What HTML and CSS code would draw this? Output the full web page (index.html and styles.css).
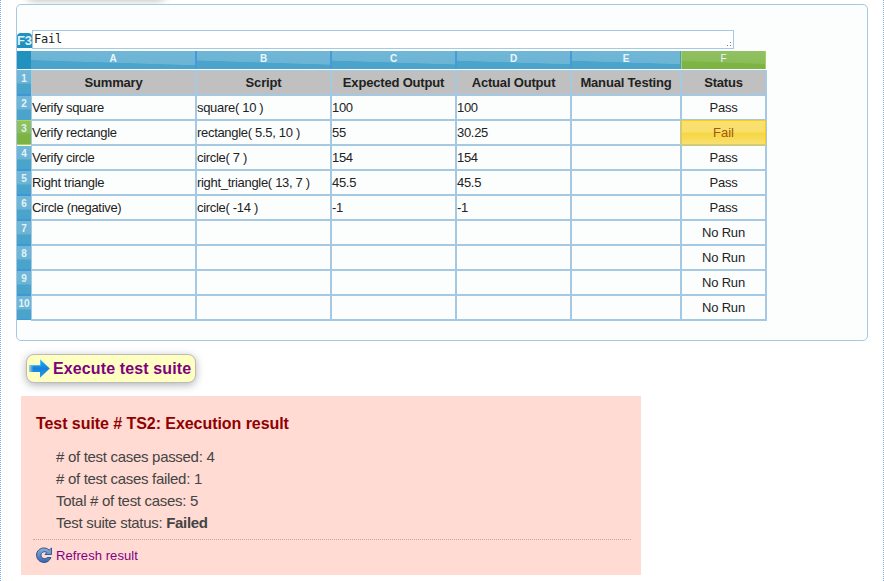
FILE: index.html
```
<!DOCTYPE html>
<html lang="en">
<head>
<meta charset="utf-8">
<title>Test suite</title>
<link rel="stylesheet" href="styles.css">
</head>
<body>
<main class="page">
  <div class="previous-button"></div>
  <section class="panel">
    <div class="formula"><span class="cell-name">F3</span><div class="formula-input">Fail<span class="grip"></span></div></div>
    <div class="sheet">
      <div class="corner"></div>
      <div class="col-heads"><span>A</span><span>B</span><span>C</span><span>D</span><span>E</span><span class="active">F</span></div>
      <div class="row-heads"><span>1</span><span>2</span><span class="active">3</span><span>4</span><span>5</span><span>6</span><span>7</span><span>8</span><span>9</span><span>10</span></div>
      <div class="cells">
        <b>Summary</b><b>Script</b><b>Expected Output</b><b>Actual Output</b><b>Manual Testing</b><b>Status</b>
        <span>Verify square</span><span>square( 10 )</span><span>100</span><span>100</span><span></span><span class="status">Pass</span>
        <span>Verify rectangle</span><span>rectangle( 5.5, 10 )</span><span>55</span><span>30.25</span><span></span><span class="status selected"><i>Fail</i></span>
        <span>Verify circle</span><span>circle( 7 )</span><span>154</span><span>154</span><span></span><span class="status">Pass</span>
        <span>Right triangle</span><span>right_triangle( 13, 7 )</span><span>45.5</span><span>45.5</span><span></span><span class="status">Pass</span>
        <span>Circle (negative)</span><span>circle( -14 )</span><span>-1</span><span>-1</span><span></span><span class="status">Pass</span>
        <span></span><span></span><span></span><span></span><span></span><span class="status">No Run</span>
        <span></span><span></span><span></span><span></span><span></span><span class="status">No Run</span>
        <span></span><span></span><span></span><span></span><span></span><span class="status">No Run</span>
        <span></span><span></span><span></span><span></span><span></span><span class="status">No Run</span>
      </div>
    </div>
  </section>
  <a class="execute">
    <svg width="22" height="20" viewBox="0 0 22 20">
      <defs>
        <linearGradient id="arrow" x1="0" y1="0" x2="0" y2="1"><stop offset="0" stop-color="#25b4f5"/><stop offset=".5" stop-color="#1482dc"/><stop offset="1" stop-color="#2a9cf0"/></linearGradient>
        <linearGradient id="fade"><stop offset="0" stop-color="#fff" stop-opacity=".35"/><stop offset=".2" stop-color="#fff"/></linearGradient>
        <mask id="tail"><rect width="22" height="20" fill="url(#fade)"/></mask>
      </defs>
      <path d="M0 6H11V.2L20.800 9.500L11 18.800V13H0Z" fill="url(#arrow)" mask="url(#tail)"/>
      <path d="M11.500 1V6.500H3" fill="none" stroke="#4cc6f6" stroke-width=".8"/>
    </svg>
    <span>Execute test suite</span>
  </a>
  <section class="result">
    <h2>Test suite # TS2: Execution result</h2>
    <ul>
      <li># of test cases passed: 4</li>
      <li># of test cases failed: 1</li>
      <li>Total # of test cases: 5</li>
      <li>Test suite status: <b>Failed</b></li>
    </ul>
    <div class="refresh">
      <svg width="16" height="16" viewBox="0 0 16 16">
        <defs><linearGradient id="blue" x1="0" y1="0" x2="0" y2="1"><stop offset="0" stop-color="#8eafdf"/><stop offset="1" stop-color="#3664ae"/></linearGradient></defs>
        <path d="M15.500 1V7.500H9L10.900 5.500C8.500 3.800 5 5.200 5 8.100C5 11.500 9 12.600 11.500 10.500H15C13.500 14 11 15.500 8 15.500C3.700 15.400.5 12 .5 8C.5 1.900 8-1.500 13.200 3Z" fill="url(#blue)" stroke="#294f87" stroke-width=".9"/>
      </svg>
      <a>Refresh result</a>
    </div>
  </section>
</main>
</body>
</html>
```
FILE: styles.css
```
* { box-sizing: border-box; }
body {
  margin: 0;
  background: #fff;
  font-family: "Liberation Sans", Arial, sans-serif;
  color: #222;
}
.page {
  position: relative;
  height: 581px;
  padding: 4px 15px 0;
  border-left: 1px dotted #78b0ee;
  border-right: 1px dotted #78b0ee;
  overflow: hidden;
}
.previous-button {
  position: absolute;
  left: 25px;
  top: -31px;
  width: 140px;
  height: 29px;
  border-radius: 8px;
  box-shadow: 0 2px 8px rgba(0, 0, 0, .3);
}
.panel {
  position: relative;
  height: 337px;
  padding-top: 25px;
  border: 1px solid #a5c9e2;
  border-radius: 5px;
  background: #fcfefe;
}
.formula { display: flex; align-items: flex-start; height: 21px; }
.cell-name {
  display: flex;
  justify-content: center;
  width: 15px;
  height: 15px;
  margin-top: 3px;
  border-radius: 4px 4px 0 0;
  background: #2191c0;
  color: #dff2fb;
  font: bold 13px/16px "Liberation Sans", Arial, sans-serif;
}
.formula-input {
  position: relative;
  width: 702px;
  height: 19px;
  padding-left: 1px;
  border: 1px solid #a5c9e2;
  background: #fff;
  font: 12px/16px "DejaVu Sans Mono", monospace;
  letter-spacing: -.2px;
}
.grip {
  position: absolute;
  right: 2px;
  bottom: 2px;
  width: 4px;
  height: 4px;
  background:
    linear-gradient(#777, #777) 0 3px / 1px 1px no-repeat,
    linear-gradient(#777, #777) 3px 3px / 1px 1px no-repeat,
    linear-gradient(#777, #777) 3px 0 / 1px 1px no-repeat;
}
.sheet {
  display: grid;
  grid-template-columns: 14px 736px;
  grid-template-rows: 18px 251px;
  row-gap: 1px;
}
.corner { background: #2191c0; }
.cells { display: grid; grid-template-columns: 166px 135px 125px 115px 110px 85px; }
.col-heads { display: grid; grid-template-columns: 166px 135px 125px 115px 109px 85px; color: #e9f7fd; font: bold 10px/15px "Liberation Sans", Arial, sans-serif; text-align: center; }
.col-heads span {
  border-right: 2px solid #459bd8;
  background: linear-gradient(181.800deg, #72b7d7 0, #6cb4d5 60%, #4aa4cc 63%, #49a3cb 100%);
}
.col-heads span:nth-child(5) { border-right-width: 1px; }
.col-heads .active {
  border: solid #a5d45c;
  border-width: 0 1px;
  background: linear-gradient(182deg, #92c163, #8abd59 60%, #7db443 64%, #7cb342);
  font-weight: 400;
}
.row-heads { display: grid; grid-template-rows: 26px repeat(8, 25px) 24px; color: #e0f3fb; font: bold 10px/15px "Liberation Sans", Arial, sans-serif; text-align: center; }
.row-heads span {
  display: flex;
  justify-content: center;
  border-bottom: 2px solid #3f97d6;
  background: linear-gradient(#72b7d7 0, #6cb4d5 13px, #4aa4cc 14px, #49a3cb);
}
.row-heads span:last-child { border-bottom-width: 1px; }
.row-heads span:first-child { padding-top: 1px; }
.row-heads .active {
  border: solid #a6dc43;
  border-width: 1px 0;
  height: 25px;
  margin-top: -1px;
  background: linear-gradient(#92c163, #8abd59 12px, #7db443 13px, #7cb342);
}
.row-heads span:nth-child(2) { border-bottom: 0; }
.cells {
  grid-template-columns: 165px 135px 125px 115px 110px 85px;
  grid-template-rows: repeat(10, 25px);
  border-left: 1px solid #a5c9e2;
  border-top: 1px solid #a5c9e2;
  font-size: 13px;
  line-height: 23px;
  letter-spacing: -.31px;
}
.cells > * { border: solid #a5c9e2; border-width: 0 2px 2px 0; white-space: nowrap; }
.cells b { background: #c0c0c0; text-align: center; letter-spacing: -.18px; }
.cells .status { text-align: center; letter-spacing: -.2px; }
.cells .selected { position: relative; letter-spacing: 0; }
.selected i {
  position: absolute;
  left: -1px;
  top: -1px;
  width: 85px;
  height: 25px;
  border: 1px solid #fccd0c;
  background: linear-gradient(#f9e173 0, #f9df6b 11px, #f6d640 12px, #f9e070 23px);
  color: #a0580c;
  font-style: normal;
}
.execute {
  display: flex;
  align-items: center;
  width: 170px;
  height: 29px;
  margin: 13px 0 13px 10px;
  padding-left: 2px;
  border: 1px solid #bbb;
  border-radius: 8px;
  background: #ffffc2;
  box-shadow: 0 2px 8px rgba(0, 0, 0, .3);
  color: #800080;
  font-size: 16px;
  font-weight: bold;
  letter-spacing: .12px;
  white-space: nowrap;
}
.execute span { margin-left: 2px; }
.result {
  width: 620px;
  height: 179px;
  margin-left: 5px;
  padding: 17px 10px 0 12px;
  background: #ffdbd3;
}
h2 { margin: 0 0 11px 3px; color: #900000; font-size: 16px; line-height: 22px; letter-spacing: -.06px; }
ul { margin: 0; padding: 0 0 0 23px; list-style: none; color: #444; font-size: 15px; line-height: 22px; letter-spacing: -.3px; }
.refresh {
  display: flex;
  align-items: center;
  gap: 4px;
  height: 28px;
  margin-top: 5px;
  padding: 2px 0 0 3px;
  border-top: 1px dotted #b7abb0;
  color: #800080;
  font-size: 13px;
  letter-spacing: .07px;
}
.refresh a { padding-top: 2px; }
```
